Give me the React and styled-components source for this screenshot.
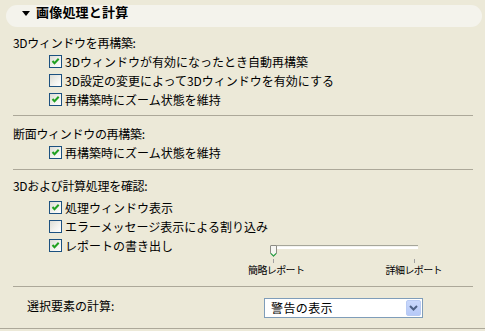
import React from 'react';
import styled, { createGlobalStyle } from 'styled-components';

const Global = createGlobalStyle`
  html, body {
    margin: 0;
    background: #ece9d8;
  }
  body {
    font-family: "Noto Sans CJK JP", "Liberation Sans", sans-serif;
    font-size: 12px;
    color: #000;
  }
`;

const Panel = styled.div`
  width: 485px;
  height: 331px;
  padding-top: 5px;
  box-sizing: border-box;
  overflow: hidden;
`;

const Header = styled.div`
  margin: 0 3px 0 6px;
  height: 22px;
  border-radius: 11px;
  background: #f4f3ec;
  display: flex;
  align-items: flex-start;
  padding: 0 0 0 16px;
  gap: 6px;
`;

const Triangle = styled.span`
  width: 0;
  height: 0;
  margin-top: 6px;
  border-left: 4px solid transparent;
  border-right: 4px solid transparent;
  border-top: 5px solid #000;
`;

const HeaderTitle = styled.span`
  font-size: 13px;
  font-weight: 700;
  line-height: 16px;
  margin-top: -1px;
  letter-spacing: 0.2px;
`;

const SectionLabel = styled.div`
  margin-top: ${p => p.$top}px;
  padding-left: 13px;
  height: 19px;
  line-height: 19px;
  letter-spacing: -0.3px;
`;

const Rows = styled.div`
  margin-top: ${p => p.$top || 0}px;
`;

const Row = styled.div`
  display: flex;
  align-items: flex-start;
  padding-left: 49px;
`;

const Check = styled.label`
  display: flex;
  align-items: center;
  gap: 3px;
  height: 19px;
  line-height: 19px;
  width: ${p => (p.$width ? `${p.$width}px` : 'auto')};
  white-space: nowrap;
`;

const Box = styled.span`
  width: 11px;
  height: 11px;
  border: 1px solid #1c5180;
  background: linear-gradient(135deg, #dcdcd5 0%, #f2f2ee 55%, #ffffff 100%);
  display: flex;
  align-items: center;
  justify-content: center;
  flex-shrink: 0;
`;

const Divider = styled.div`
  margin: ${p => p.$top}px ${p => (p.$full ? 0 : 12)}px 0 ${p => (p.$full ? 0 : 13)}px;
  height: 1px;
  background: #aca899;
`;

const SliderBlock = styled.div`
  width: 194px;
  padding-top: 6px;
`;

const TrackArea = styled.div`
  position: relative;
  height: 12px;
`;

const Track = styled.div`
  margin: 3px 24px 0 25px;
  height: 1px;
  border-top: 1px solid #a6a69a;
  border-bottom: 2px solid #ffffff;
  background: #f4f4f0;
`;

const Thumb = styled.svg`
  position: absolute;
  left: 22px;
  top: 0;
`;

const Ticks = styled.div`
  display: flex;
  justify-content: space-between;
  margin: 2px 27px 0 25px;
  height: 4px;
`;

const Tick = styled.span`
  width: 1px;
  height: 4px;
  background: #a0a0a0;
`;

const SliderLabels = styled.div`
  display: flex;
  justify-content: space-between;
  margin-top: 1px;
  font-size: 10px;
  line-height: 12px;
  letter-spacing: -0.6px;
`;

const CalcRow = styled.div`
  display: flex;
  align-items: flex-start;
  margin-top: 11px;
  padding-left: 27px;
`;

const CalcLabel = styled.div`
  width: 237px;
  line-height: 16px;
`;

const Select = styled.div`
  width: 151px;
  height: 18px;
  border: 1px solid #7f9db9;
  background: #fff;
  display: flex;
  align-items: center;
  justify-content: space-between;
  padding-left: 6px;
`;

const SelectText = styled.span`
  line-height: 18px;
  letter-spacing: 0.4px;
`;

const SelectButton = styled.span`
  width: 13px;
  height: 14px;
  margin-right: 1px;
  border: 1px solid #b9cbf3;
  border-radius: 2px;
  background: linear-gradient(180deg, #c9d8fc 0%, #b6c9f7 100%);
  display: flex;
  align-items: center;
  justify-content: center;
`;

function CheckMark() {
  return (
    <svg width="9" height="9" viewBox="0 0 9 9">
      <path d="M1.5 4 L3.5 6.2 L7.7 1.8" fill="none" stroke="#21a121" strokeWidth="2" />
    </svg>
  );
}

function Checkbox({ checked, children, width }) {
  return (
    <Check $width={width}>
      <Box>{checked && <CheckMark />}</Box>
      <span>{children}</span>
    </Check>
  );
}

export default function App() {
  return (
    <>
      <Global />
      <Panel>
        <Header>
          <Triangle />
          <HeaderTitle>画像処理と計算</HeaderTitle>
        </Header>

        <SectionLabel $top={6}>3Dウィンドウを再構築:</SectionLabel>
        <Rows>
          <Row><Checkbox checked>3Dウィンドウが有効になったとき自動再構築</Checkbox></Row>
          <Row><Checkbox>3D設定の変更によって3Dウィンドウを有効にする</Checkbox></Row>
          <Row><Checkbox checked>再構築時にズーム状態を維持</Checkbox></Row>
        </Rows>
        <Divider $top={6} />

        <SectionLabel $top={8}>断面ウィンドウの再構築:</SectionLabel>
        <Rows>
          <Row><Checkbox checked>再構築時にズーム状態を維持</Checkbox></Row>
        </Rows>
        <Divider $top={7} />

        <SectionLabel $top={6}>3Dおよび計算処理を確認:</SectionLabel>
        <Rows $top={3}>
          <Row><Checkbox checked>処理ウィンドウ表示</Checkbox></Row>
          <Row><Checkbox>エラーメッセージ表示による割り込み</Checkbox></Row>
          <Row>
            <Checkbox checked width={199}>レポートの書き出し</Checkbox>
            <SliderBlock>
              <TrackArea>
                <Track />
                <Thumb width="7" height="12" viewBox="0 0 7 12">
                  <path d="M1 0.5 H6 Q6.5 0.5 6.5 1 V8.5 L3.5 11.5 L0.5 8.5 V1 Q0.5 0.5 1 0.5 Z" fill="#f6f6f2" stroke="#8c8c84" strokeWidth="1" />
                  <path d="M0.8 8.3 L3.5 11 L6.2 8.3" fill="none" stroke="#2fa84a" strokeWidth="1.2" />
                </Thumb>
              </TrackArea>
              <Ticks>
                <Tick />
                <Tick />
              </Ticks>
              <SliderLabels>
                <span>簡略レポート</span>
                <span>詳細レポート</span>
              </SliderLabels>
            </SliderBlock>
          </Row>
        </Rows>
        <Divider $top={10} />

        <CalcRow>
          <CalcLabel>選択要素の計算:</CalcLabel>
          <Select>
            <SelectText>警告の表示</SelectText>
            <SelectButton>
              <svg width="9" height="6" viewBox="0 0 9 6">
                <path d="M1 1 L4.5 4.5 L8 1" fill="none" stroke="#4d6185" strokeWidth="2" />
              </svg>
            </SelectButton>
          </Select>
        </CalcRow>
        <Divider $top={10} $full />
      </Panel>
    </>
  );
}
